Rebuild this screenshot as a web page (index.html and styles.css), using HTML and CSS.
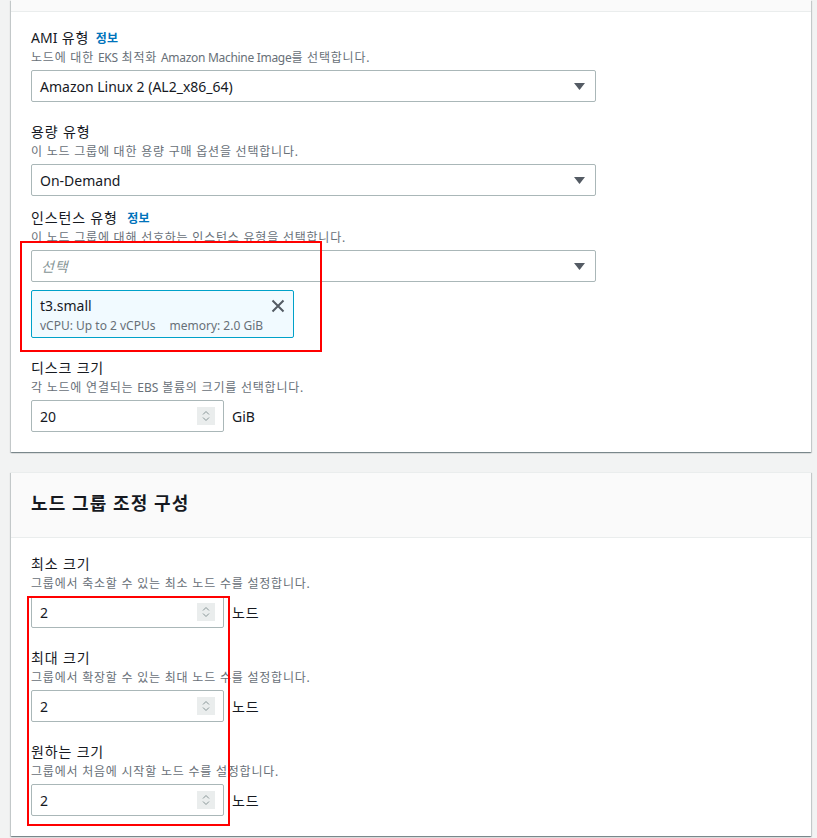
FILE: index.html
```html
<!DOCTYPE html>
<html lang="ko">
<head>
<meta charset="utf-8">
<title>노드 그룹 구성</title>
<link rel="stylesheet" href="styles.css">
</head>
<body>
<div class="page">
  <section class="card">
    <div class="card-header slim"></div>
    <div class="card-body">
      <div class="field">
        <div class="label"><span class="lat">AMI</span> 유형 <span class="info info-ami">정보</span></div>
        <div class="desc">노드에 대한 <span class="lat tight">EKS</span> 최적화 <span class="lat tight">Amazon Machine Image</span>를 선택합니다.</div>
        <div class="select"><span class="value">Amazon Linux 2 (AL2_x86_64)</span><svg class="caret" width="11" height="7" viewBox="0 0 11 7"><path d="M0 0 H11 L5.5 7 Z" fill="#545b64"/></svg></div>
      </div>
      <div class="field">
        <div class="label">용량 유형</div>
        <div class="desc">이 노드 그룹에 대한 용량 구매 옵션을 선택합니다.</div>
        <div class="select"><span class="value">On-Demand</span><svg class="caret" width="11" height="7" viewBox="0 0 11 7"><path d="M0 0 H11 L5.5 7 Z" fill="#545b64"/></svg></div>
      </div>
      <div class="field tight-field">
        <div class="label">인스턴스 유형 <span class="info">정보</span></div>
        <div class="desc">이 노드 그룹에 대해 선호하는 인스턴스 유형을 선택합니다.</div>
        <div class="select"><span class="placeholder">선택</span><svg class="caret" width="11" height="7" viewBox="0 0 11 7"><path d="M0 0 H11 L5.5 7 Z" fill="#545b64"/></svg></div>
        <div class="token">
          <div class="token-text">
            <div class="token-title">t3.small</div>
            <div class="token-meta"><span>vCPU: Up to 2 vCPUs</span><span>memory: 2.0 GiB</span></div>
          </div>
          <svg class="token-close" width="14" height="14" viewBox="0 0 14 14"><path d="M1.5 1.5 L12.5 12.5 M12.5 1.5 L1.5 12.5" stroke="#545b64" stroke-width="2" fill="none"/></svg>
        </div>
      </div>
      <div class="field">
        <div class="label">디스크 크기</div>
        <div class="desc">각 노드에 연결되는 <span class="lat">EBS</span> 볼륨의 크기를 선택합니다.</div>
        <div class="num-row">
          <div class="num"><span class="value">20</span><svg class="spin" width="18" height="18" viewBox="0 0 18 18"><rect width="18" height="18" fill="#eaeded"/><path d="M6 7.5 L9 4.5 L12 7.5 M6 10.5 L9 13.5 L12 10.5" stroke="#879596" stroke-width="1" fill="none"/></svg></div>
          <span class="unit lat">GiB</span>
        </div>
      </div>
    </div>
  </section>

  <section class="card">
    <div class="card-header titled"><h2>노드 그룹 조정 구성</h2></div>
    <div class="card-body">
      <div class="field">
        <div class="label">최소 크기</div>
        <div class="desc">그룹에서 축소할 수 있는 최소 노드 수를 설정합니다.</div>
        <div class="num-row">
          <div class="num"><span class="value">2</span><svg class="spin" width="18" height="18" viewBox="0 0 18 18"><rect width="18" height="18" fill="#eaeded"/><path d="M6 7.5 L9 4.5 L12 7.5 M6 10.5 L9 13.5 L12 10.5" stroke="#879596" stroke-width="1" fill="none"/></svg></div>
          <span class="unit">노드</span>
        </div>
      </div>
      <div class="field">
        <div class="label">최대 크기</div>
        <div class="desc">그룹에서 확장할 수 있는 최대 노드 수를 설정합니다.</div>
        <div class="num-row">
          <div class="num"><span class="value">2</span><svg class="spin" width="18" height="18" viewBox="0 0 18 18"><rect width="18" height="18" fill="#eaeded"/><path d="M6 7.5 L9 4.5 L12 7.5 M6 10.5 L9 13.5 L12 10.5" stroke="#879596" stroke-width="1" fill="none"/></svg></div>
          <span class="unit">노드</span>
        </div>
      </div>
      <div class="field">
        <div class="label">원하는 크기</div>
        <div class="desc">그룹에서 처음에 시작할 노드 수를 설정합니다.</div>
        <div class="num-row">
          <div class="num"><span class="value">2</span><svg class="spin" width="18" height="18" viewBox="0 0 18 18"><rect width="18" height="18" fill="#eaeded"/><path d="M6 7.5 L9 4.5 L12 7.5 M6 10.5 L9 13.5 L12 10.5" stroke="#879596" stroke-width="1" fill="none"/></svg></div>
          <span class="unit">노드</span>
        </div>
      </div>
    </div>
  </section>
</div>
<div class="highlight hl-instance"></div>
<div class="highlight hl-scaling"></div>
</body>
</html>
```

FILE: styles.css
```css
html, body {
  margin: 0;
  padding: 0;
}
body {
  position: relative;
  background: #f2f3f3;
  font-family: "Noto Sans", "Noto Sans CJK KR", sans-serif;
  color: #16191f;
  width: 817px;
  height: 838px;
  overflow: hidden;
}
.page {
  padding: 0 6px 0 11px;
}
.card {
  background: #fff;
  box-shadow: 0 1px 1px 0 rgba(0, 28, 36, 0.3), 1px 1px 1px 0 rgba(0, 28, 36, 0.15), -1px 1px 1px 0 rgba(0, 28, 36, 0.15);
}
.card + .card {
  margin-top: 20px;
  border-top: 1px solid #eaeded;
}
.card-header {
  background: #fafafa;
  border-bottom: 1px solid #eaeded;
}
.card-header.slim {
  height: 11px;
}
.card-header.titled {
  padding: 18px 20px 22px;
}
.card-header h2 {
  margin: 0;
  font-size: 18px;
  line-height: 24px;
  font-weight: 700;
  letter-spacing: 0.06em;
}
.card-body {
  padding: 16px 20px 20px;
  display: flex;
  flex-direction: column;
}
.field {
  display: flex;
  flex-direction: column;
  align-items: flex-start;
}
.field + .field {
  margin-top: 20px;
}
.field.tight-field {
  margin-top: 12px;
}
.label {
  font-size: 14px;
  line-height: 20px;
  height: 20px;
  letter-spacing: 0.06em;
  white-space: nowrap;
}
.lat {
  letter-spacing: 0;
}
.lat.tight {
  letter-spacing: -0.025em;
}
.info {
  font-size: 12px;
  font-weight: 700;
  color: #0073bb;
  margin-left: 5px;
  letter-spacing: 0.02em;
}
.info.info-ami {
  margin-left: 2px;
}
.desc {
  font-size: 12px;
  line-height: 18px;
  height: 18px;
  color: #687078;
  margin-top: 1px;
  letter-spacing: 0.065em;
  white-space: nowrap;
}
.select {
  margin-top: 3px;
  box-sizing: border-box;
  width: 565px;
  height: 32px;
  border: 1px solid #aab7b8;
  border-radius: 2px;
  display: flex;
  align-items: center;
  justify-content: space-between;
  padding: 0 10px 0 8px;
  font-size: 14px;
}
.placeholder {
  font-style: italic;
  color: #879596;
  padding-left: 1px;
  letter-spacing: 0.06em;
}
.token {
  margin-top: 8px;
  box-sizing: border-box;
  width: 263px;
  height: 48px;
  background: #f1faff;
  border: 1px solid #00a1c9;
  border-radius: 2px;
  padding: 5px 8px 3px 8px;
  display: flex;
  justify-content: space-between;
  align-items: flex-start;
}
.token-title {
  font-size: 14px;
  line-height: 20px;
}
.token-meta {
  font-size: 12px;
  line-height: 16px;
  color: #687078;
  display: flex;
  gap: 14px;
  margin-top: 2px;
}
.token-close {
  margin-top: 3px;
}
.num-row {
  margin-top: 3px;
  display: flex;
  align-items: center;
  gap: 8px;
}
.num {
  box-sizing: border-box;
  width: 193px;
  height: 32px;
  border: 1px solid #aab7b8;
  border-radius: 2px;
  display: flex;
  align-items: center;
  justify-content: space-between;
  padding: 0 8px 0 8px;
  font-size: 14px;
}
.unit {
  font-size: 14px;
  letter-spacing: 0.06em;
}
.unit.lat {
  letter-spacing: 0;
}
.highlight {
  position: absolute;
  border: 2px solid #ff0000;
  box-sizing: border-box;
}
.hl-instance {
  left: 20px;
  top: 241px;
  width: 302px;
  height: 111px;
}
.hl-scaling {
  left: 27px;
  top: 596px;
  width: 203px;
  height: 230px;
}
```
